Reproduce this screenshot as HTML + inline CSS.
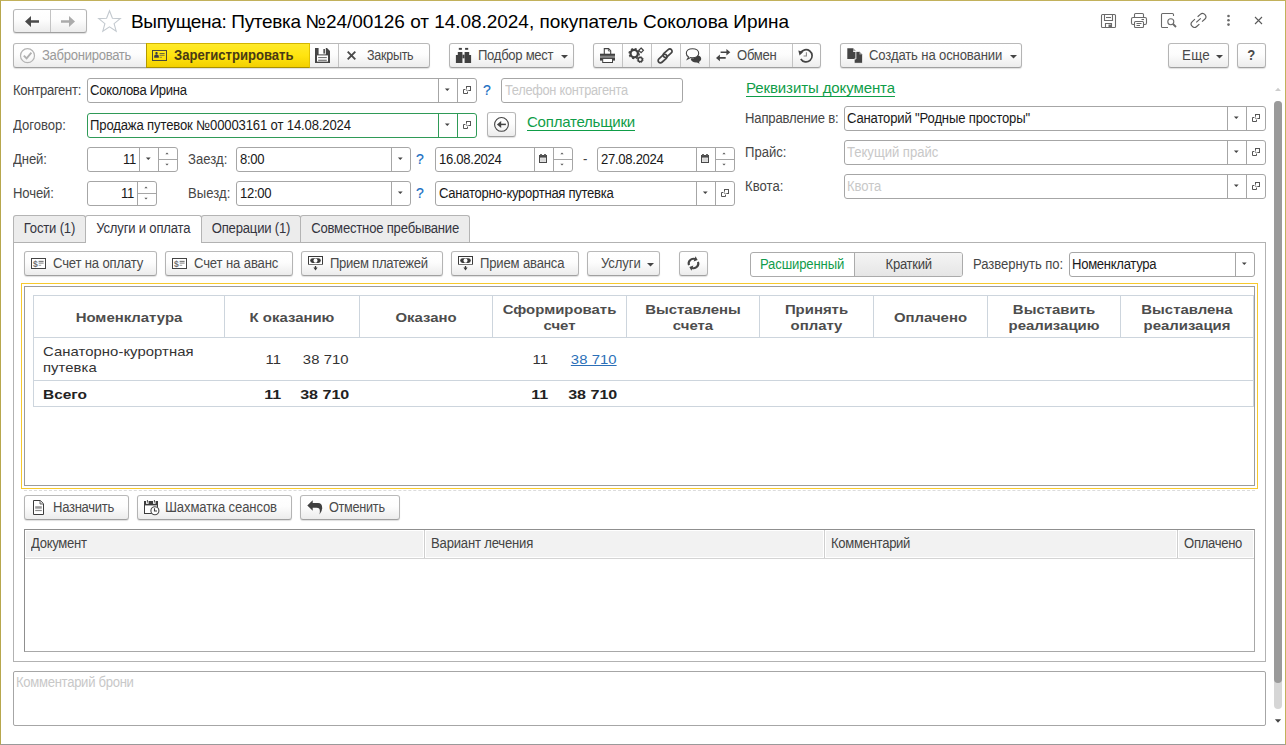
<!DOCTYPE html>
<html lang="ru"><head>
<meta charset="utf-8">
<title>Путевка</title>
<style>
*{box-sizing:border-box;margin:0;padding:0}
html,body{width:1286px;height:745px;overflow:hidden;background:#fff}
body{position:relative;font-family:"Liberation Sans",sans-serif;font-size:13px;letter-spacing:-0.25px;color:#333;
 border-left:1px solid #b7a74d;border-top:1px solid #c2b15b;border-right:1px solid #c2b15b;border-bottom:1px solid #9a9a9a}
#r{position:absolute;left:-1px;top:-1px;width:1286px;height:745px}
.a{position:absolute}
.btn{position:absolute;height:25px;border:1px solid #b4b4b4;border-top-color:#b9b9b9;border-bottom-color:#a0a0a0;border-radius:3px;
 background:linear-gradient(#ffffff 0%,#fdfdfd 45%,#ececec 100%);box-shadow:0 1px 1px rgba(0,0,0,.13);line-height:23px;white-space:nowrap;color:#4a4a4a}
.btn .t{position:absolute;top:0}
.btn svg{position:absolute}
.sep{position:absolute;top:0;width:1px;height:23px;background:#c3c3c3}
.inp{position:absolute;height:25px;border:1px solid #a6a6a6;border-radius:3px;background:#fff;line-height:23px;white-space:nowrap;color:#1a1a1a}
.inp .t{position:absolute;top:0}
.inp .ph{position:absolute;top:0;color:#c8c8c8}
.inp .d{position:absolute;top:0;width:1px;height:23px;background:#a6a6a6}
.inp.g{border-color:#2f9a57}
.inp.g .d{background:#2f9a57}
.inp svg{position:absolute}
.lbl{position:absolute;line-height:25px;white-space:nowrap;color:#464646}
.lnk{position:absolute;font-size:15px;letter-spacing:-0.2px;color:#0f9d48;text-decoration:underline;text-decoration-skip-ink:none;text-underline-offset:2.6px;text-decoration-thickness:1px;white-space:nowrap;line-height:18px}
.q{position:absolute;font-size:14px;-webkit-text-stroke:0.2px #1a6fc2;color:#1a6fc2;line-height:25px;letter-spacing:0}
.tab{position:absolute;top:215px;height:27px;border:1px solid #b4b4b4;border-bottom:none;border-radius:3px 3px 0 0;background:#ececec;line-height:25px;text-align:center;color:#34343e;letter-spacing:-0.15px}
.tab.on{background:#fff;height:28px;z-index:3}
</style>
</head>
<body>
<div id="r">
<!-- nav -->
<div class="btn" style="left:13px;top:9px;width:74px;height:24px">
 <div class="sep" style="left:36px;height:22px"></div>
 <svg style="left:8px;top:5px" width="20" height="13" viewBox="0 0 20 13"><path d="M3 6.5 L9 1 V5.2 H17 V7.8 H9 V12 Z" fill="#4a4a4a"></path></svg>
 <svg style="left:44px;top:5px" width="20" height="13" viewBox="0 0 20 13"><path d="M17 6.5 L11 1 V5.2 H3 V7.8 H11 V12 Z" fill="#ababab"></path></svg>
</div>
<!-- star -->
<svg class="a" style="left:97px;top:9px" width="25" height="24" viewBox="0 0 25 24"><path d="M12.5 1.8 L15.4 9.2 L23.3 9.6 L17.1 14.6 L19.2 22.2 L12.5 17.9 L5.8 22.2 L7.9 14.6 L1.7 9.6 L9.6 9.2 Z" fill="none" stroke="#c3c9cf" stroke-width="1.1" stroke-linejoin="miter"></path></svg>
<div class="a" style="left:131px;top:11px;font-size:19px;letter-spacing:-0.035px;line-height:22px;color:#000;white-space:nowrap"><span style="letter-spacing:-0.335px">Выпущена: Путевка </span>№24/00126 от 14.08.2024, покупатель Соколова Ирина</div>
<!-- top right icons -->
<svg class="a" style="left:1100px;top:13px" width="17" height="16" viewBox="0 0 17 16" fill="none" stroke="#6a6a6a" stroke-width="1.1">
 <path d="M1.5 2.6 Q1.5 1.5 2.6 1.5 H14.4 Q15.5 1.5 15.5 2.6 V13.4 Q15.5 14.5 14.4 14.5 H2.6 Q1.5 14.5 1.5 13.4 Z"></path>
 <path d="M4.5 1.5 V7.5 H12.5 V1.5"></path><path d="M6 4.5 H11"></path>
 <path d="M5.5 14.5 V10.5 H11.5 V14.5"></path><rect x="8.5" y="11.5" width="2.5" height="3" fill="#6a6a6a" stroke="none"></rect>
</svg>
<svg class="a" style="left:1130px;top:12px" width="18" height="17" viewBox="0 0 18 17" fill="none" stroke="#6a6a6a" stroke-width="1.1">
 <path d="M4.5 5.5 V2.6 Q4.5 1.5 5.6 1.5 H12.4 Q13.5 1.5 13.5 2.6 V5.5"></path>
 <path d="M4.5 12.5 H3 Q1.5 12.5 1.5 11 V7 Q1.5 5.5 3 5.5 H15 Q16.5 5.5 16.5 7 V11 Q16.5 12.5 15 12.5 H13.5"></path>
 <rect x="4.5" y="9.5" width="9" height="6" rx="1"></rect>
 <path d="M6.5 11.5 H11.5 M6.5 13.5 H10"></path><path d="M11.5 7.5 H14"></path>
</svg>
<svg class="a" style="left:1160px;top:12px" width="18" height="17" viewBox="0 0 18 17" fill="none" stroke="#6a6a6a" stroke-width="1.1">
 <path d="M13.5 4 V2.6 Q13.5 1.5 12.4 1.5 H2.6 Q1.5 1.5 1.5 2.6 V14.4 Q1.5 15.5 2.6 15.5 H8"></path>
 <circle cx="10.8" cy="9.8" r="3"></circle><path d="M13 12 L16 15" stroke-width="1.8"></path>
</svg>
<svg class="a" style="left:1189px;top:11px" width="19" height="19" viewBox="0 0 19 19" fill="none" stroke="#5e5e5e" stroke-width="1.15"><g transform="translate(9.5 9.4) rotate(-42)"><path d="M-1.8 -3.3 H-5.4 A3.3 3.3 0 0 0 -5.4 3.3 H-1.8 M1.8 -3.3 H5.4 A3.3 3.3 0 0 1 5.4 3.3 H1.8 M-3 0 H3"></path></g></svg>
<svg class="a" style="left:1226px;top:14px" width="5" height="13" viewBox="0 0 5 13"><circle cx="2.5" cy="2" r="1.3" fill="#6a6a6a"></circle><circle cx="2.5" cy="6.3" r="1.3" fill="#6a6a6a"></circle><circle cx="2.5" cy="10.6" r="1.3" fill="#6a6a6a"></circle></svg>
<svg class="a" style="left:1254px;top:16px" width="9" height="9" viewBox="0 0 9 9"><path d="M1 1 L8 8 M8 1 L1 8" stroke="#5a5a5a" stroke-width="1.1" fill="none"></path></svg>

<!-- toolbar group 1 -->
<div class="btn" style="left:13px;top:43px;width:417px">
 <svg style="left:5px;top:3px" width="17" height="17" viewBox="0 0 17 17" fill="none"><circle cx="8.5" cy="8.7" r="7" stroke="#b4b4b4" stroke-width="1.2"></circle><path d="M4.8 8.6 L7.6 11.4 L12.4 5.6" stroke="#b0b0b0" stroke-width="1.9"></path></svg>
 <div class="t" style="left: 28px; color: rgb(154, 154, 154); font-size: 14px; letter-spacing: -0.319px; transform: scaleX(0.935); transform-origin: 0px 50%;">Забронировать</div>
 <div class="a" style="left:132px;top:-1px;width:164px;height:25px;border:1px solid #c9a800;border-left-color:#b39a00;border-top-color:#d2b400;border-bottom-color:#a89000;border-right-color:#e2c300;background:linear-gradient(#ffea2a 0%,#ffe410 50%,#f3d000 100%)">
  <svg style="left:5px;top:6px" width="15" height="11" viewBox="0 0 15 11"><rect x="0.5" y="0.5" width="14" height="10" fill="none" stroke="#4b4a3c" stroke-width="1"></rect><rect x="3.4" y="2" width="2.2" height="2.6" rx="0.8" fill="#3c3c4a"></rect><path d="M2.2 7.8 V6 Q2.2 4.4 4.5 4.4 Q6.8 4.4 6.8 6 V7.8 Z" fill="#3c3c4a"></path><rect x="7.6" y="3" width="5" height="1.2" fill="#6e6838"></rect><rect x="7.6" y="5" width="5" height="1" fill="#9a8f30"></rect><rect x="7.6" y="6.8" width="2.4" height="1" fill="#9a8f30"></rect></svg>
  <div class="t" style="left: 27px; top: 0px; font-weight: bold; color: rgb(73, 58, 20); letter-spacing: -0.002px; font-size: 14px; transform: scaleX(0.935); transform-origin: 0px 50%;">Зарегистрировать</div>
 </div>
 <svg style="left:301px;top:4px" width="15" height="15" viewBox="0 0 15 15"><path d="M0 0 H12 L15 3 V15 H0 Z" fill="#454545"></path><rect x="3.6" y="0" width="7.2" height="6.4" fill="#fff"></rect><rect x="8.4" y="1" width="1.5" height="4.6" fill="#454545"></rect><rect x="2" y="7.4" width="11" height="6.2" fill="#fff"></rect><rect x="3.2" y="9" width="8.6" height="1.1" fill="#777"></rect><rect x="3.2" y="11.7" width="8.6" height="1.1" fill="#666"></rect></svg>
 <div class="sep" style="left:324px"></div>
 <svg style="left:333px;top:7px" width="9" height="9" viewBox="0 0 9 9"><path d="M0.7 0.7 L8.3 8.3 M8.3 0.7 L0.7 8.3" stroke="#4a4a4a" stroke-width="1.9"></path></svg>
 <div class="t" style="letter-spacing: -0.300px; left: 353px; font-size: 14px; transform: scaleX(0.8950); transform-origin: 0px 50%;">Закрыть</div>
</div>
<!-- Подбор мест -->
<div class="btn" style="left:449px;top:43px;width:125px">
 <svg style="left:5px;top:3px" width="17" height="17" viewBox="0 0 17 17" fill="#404040"><rect x="3.8" y="0.9" width="3.1" height="1.9"></rect><rect x="10.1" y="0.9" width="3.1" height="1.9"></rect><path d="M2.8 5 H7.4 V15.9 H0.9 V7.9 H2.8 Z"></path><path d="M9.6 5 H14.2 V7.9 H16.1 V15.9 H9.6 Z"></path><rect x="7.4" y="7.7" width="2.2" height="3.6"></rect></svg>
 <div class="t" style="left: 28px; font-size: 14px; letter-spacing: -0.32px; transform: scaleX(0.935); transform-origin: 0px 50%;">Подбор мест</div>
 <svg style="left:111px;top:11px" width="7" height="4" viewBox="0 0 7 4"><path d="M0 0 H7 L3.5 3.6 Z" fill="#444"></path></svg>
</div>
<!-- icon group -->
<div class="btn" style="left:593px;top:43px;width:228px">
 <div class="sep" style="left:28px"></div><div class="sep" style="left:57px"></div><div class="sep" style="left:86px"></div><div class="sep" style="left:115px"></div><div class="sep" style="left:198px"></div>
 <svg style="left:6px;top:4px" width="15" height="15" viewBox="0 0 15 15"><path d="M4.3 6 V0.6 H8.6 L10.7 2.7 V6" fill="#fff" stroke="#444" stroke-width="1.1"></path><path d="M8.4 0.8 V3 H10.6" fill="none" stroke="#555" stroke-width=".9"></path><rect x="0" y="5.7" width="15" height="2.2" fill="#404040"></rect><rect x="0" y="7.9" width="15" height="1.7" fill="#858585"></rect><rect x="0" y="9.6" width="15" height="3" fill="#404040"></rect><rect x="2.7" y="10.4" width="9.8" height="4.1" fill="#fff" stroke="#404040" stroke-width="1"></rect></svg>
 <svg style="left:34px;top:3px" width="17" height="17" viewBox="0 0 17 17" fill="none" stroke="#404040"><circle cx="6.2" cy="6.6" r="3.7" stroke-width="2.3"></circle><circle cx="6.2" cy="6.6" r="5.1" stroke-width="1.3" stroke-dasharray="2 2"></circle><circle cx="12.2" cy="12.6" r="2.1" stroke-width="1.5"></circle><circle cx="12.2" cy="12.6" r="3" stroke-width="0.9" stroke-dasharray="1.2 1.16"></circle><path d="M13.1 1 L15.4 3.3 L13.1 5.6 L10.8 3.3 Z" stroke-width="1.2"></path></svg>
 <svg style="left:63px;top:4px" width="16" height="16" viewBox="0 0 16 16" fill="none" stroke="#444" stroke-width="1.7"><rect x="-5.2" y="-2.3" width="10.4" height="4.6" rx="2.3" transform="translate(5.6 10.6) rotate(-42)"></rect><rect x="-5.2" y="-2.3" width="10.4" height="4.6" rx="2.3" transform="translate(10.6 5.2) rotate(-42)"></rect></svg>
 <svg style="left:91px;top:4px" width="17" height="16" viewBox="0 0 17 16"><path d="M7.5 0.7 C3.8 0.7 1.3 2.7 1.3 5.2 C1.3 6.9 2.3 8.2 3.6 9 L2.4 11.3 L5.6 9.6 C6.2 9.7 6.9 9.8 7.5 9.8 C11.2 9.8 13.7 7.8 13.7 5.2 C13.7 2.7 11.2 0.7 7.5 0.7 Z" fill="#fff" stroke="#444" stroke-width="1.1"></path><path d="M12.6 7.2 C14.8 7.6 16.2 9 16.2 10.8 C16.2 12.2 15.3 13.3 14 13.9 L14.6 15.8 L12 14.4 C8.6 14.7 6.2 13.3 5.8 11.2 L6.4 10.3 C9.8 10.3 12 9.2 12.6 7.2 Z" fill="#404040"></path></svg>
 <svg style="left:121px;top:5px" width="16" height="13" viewBox="0 0 16 13" fill="#444"><path d="M11.4 0 L15.3 3.3 L11.4 6.6 V4.1 H5.6 V2.5 H11.4 Z"></path><path d="M4.9 5.6 L1 8.9 L4.9 12.2 V9.7 H10.7 V8.1 H4.9 Z"></path></svg>
 <div class="t" style="left: 143px; font-size: 14px; letter-spacing: -0.328px; transform: scaleX(0.935); transform-origin: 0px 50%;">Обмен</div>
 <svg style="left:203px;top:3px" width="17" height="17" viewBox="0 0 17 17" fill="none" stroke="#444"><path d="M3.6 6 A6.1 6.1 0 1 1 3.8 12" stroke-width="1.7"></path><path d="M1.3 3.4 L6.3 4.8 L2.6 8.4 Z" fill="#444" stroke="none"></path><path d="M9.4 5.2 V9 H6.6" stroke="#888" stroke-width="1.1"></path></svg>
</div>
<!-- Создать на основании -->
<div class="btn" style="left:840px;top:43px;width:182px">
 <svg style="left:6px;top:4px" width="16" height="16" viewBox="0 0 16 16"><path d="M0.3 0.3 H6 L8.9 3.2 V11 H0.3 Z" fill="#444"></path><path d="M6 0.3 V3.2 H8.9 Z" fill="#999"></path><path d="M6.3 3.4 H12.4 L15.6 6.6 V15.3 H7.2 V11 H8.9 V3.4 Z" fill="#444" stroke="#fff" stroke-width=".8"></path><path d="M12.4 3.6 V6.6 H15.4 Z" fill="#999"></path></svg>
 <div class="t" style="letter-spacing: -0.146px; left: 28px; font-size: 14px; transform: scaleX(0.935); transform-origin: 0px 50%;">Создать на основании</div>
 <svg style="left:169px;top:11px" width="7" height="4" viewBox="0 0 7 4"><path d="M0 0 H7 L3.5 3.6 Z" fill="#444"></path></svg>
</div>
<!-- Еще -->
<div class="btn" style="left:1168px;top:43px;width:61px">
 <div class="t" style="left: 13px; font-size: 14px; letter-spacing: 0.3px; transform: scaleX(0.9561); transform-origin: 0px 50%;">Еще</div>
 <svg style="left:47px;top:11px" width="7" height="4" viewBox="0 0 7 4"><path d="M0 0 H7 L3.5 3.6 Z" fill="#444"></path></svg>
</div>
<div class="btn" style="left:1237px;top:43px;width:29px;text-align:center;font-weight:bold;font-size:13px;letter-spacing:0"><span style="display: inline-block; font-size: 14px; letter-spacing: -0.056px; transform: scaleX(0.935); transform-origin: 50% 50%;">?</span></div>

<!-- form left -->
<div class="lbl" style="left: 13px; top: 78px; font-size: 14px; letter-spacing: -0.315px; transform: scaleX(0.935); transform-origin: 0px 50%;">Контрагент:</div>
<div class="inp" style="left:87px;top:78px;width:390px">
 <div class="t" style="left: 2px; font-size: 14px; letter-spacing: -0.32px; transform: scaleX(0.935); transform-origin: 0px 50%;">Соколова Ирина</div>
 <div class="d" style="left:350px"></div><div class="d" style="left:369px"></div>
 <svg style="left:356px;top:9px" width="7" height="4" viewBox="0 0 7 4"><path d="M0.9 0.4 H5.7 L3.3 3.1 Z" fill="#444"></path></svg>
 <svg style="left:375px;top:7px" width="8" height="8" viewBox="0 0 8 8" fill="none" stroke-width="1"><rect x="3.5" y="0.5" width="4" height="4" stroke="#555"></rect><path d="M3.5 2.5 V4.5 H5.5" stroke="#b8b8b8"></path><path d="M2.4 3.5 H0.5 V7.5 H4.5 V5.6" stroke="#555"></path></svg>
</div>
<div class="q" style="left:483px;top:78px">?</div>
<div class="inp" style="left:501px;top:78px;width:182px"><div class="ph" style="letter-spacing: -0.300px; left: 3px; font-size: 14px; transform: scaleX(0.9140); transform-origin: 0px 50%;">Телефон контрагента</div></div>

<div class="lbl" style="letter-spacing: -0.016px; left: 13px; top: 113px; font-size: 14px; transform: scaleX(0.935); transform-origin: 0px 50%;">Договор:</div>
<div class="inp g" style="left:87px;top:113px;width:390px">
 <div class="t" style="letter-spacing: -0.157px; left: 2px; font-size: 14px; transform: scaleX(0.935); transform-origin: 0px 50%;">Продажа путевок №00003161 от 14.08.2024</div>
 <div class="d" style="left:350px"></div><div class="d" style="left:369px"></div>
 <svg style="left:356px;top:9px" width="7" height="4" viewBox="0 0 7 4"><path d="M0.9 0.4 H5.7 L3.3 3.1 Z" fill="#444"></path></svg>
 <svg style="left:375px;top:7px" width="8" height="8" viewBox="0 0 8 8" fill="none" stroke-width="1"><rect x="3.5" y="0.5" width="4" height="4" stroke="#555"></rect><path d="M3.5 2.5 V4.5 H5.5" stroke="#b8b8b8"></path><path d="M2.4 3.5 H0.5 V7.5 H4.5 V5.6" stroke="#555"></path></svg>
</div>
<div class="btn" style="left:487px;top:112px;width:29px">
 <svg style="left:5px;top:3px" width="17" height="17" viewBox="0 0 17 17" fill="none" stroke="#444"><circle cx="8.5" cy="8.4" r="6.9" stroke-width="1.1"></circle><path d="M12.9 8.4 H8" stroke-width="1.5"></path><path d="M3.9 8.4 L8.2 4.9 V11.9 Z" fill="#444" stroke="none"></path></svg>
</div>
<div class="lnk" style="letter-spacing:-0.22px;left:527px;top:113px">Соплательщики</div>

<div class="lbl" style="letter-spacing: -0.104px; left: 13px; top: 147px; font-size: 14px; transform: scaleX(0.935); transform-origin: 0px 50%;">Дней:</div>
<div class="inp" style="left:87px;top:147px;width:91px">
 <div class="t" style="right: 41px; font-size: 14px; letter-spacing: -0.322px; transform: scaleX(0.935); transform-origin: 100% 50%;">11</div>
 <div class="d" style="left:51px"></div><div class="d" style="left:70px"></div>
 <div class="a" style="left:71px;top:11px;width:18px;height:1px;background:#a6a6a6"></div>
 <svg style="left:57px;top:9px" width="7" height="4" viewBox="0 0 7 4"><path d="M0.9 0.4 H5.7 L3.3 3.1 Z" fill="#444"></path></svg>
 <svg style="left:77px;top:4px" width="4" height="3" viewBox="0 0 4 3"><path d="M0.4 2.3 H3.6 L2 0.5 Z" fill="#555"></path></svg>
 <svg style="left:77px;top:15px" width="4" height="3" viewBox="0 0 4 3"><path d="M0.4 0.7 H3.6 L2 2.5 Z" fill="#555"></path></svg>
</div>
<div class="lbl" style="letter-spacing: 0.059px; left: 188px; top: 147px; font-size: 14px; transform: scaleX(0.935); transform-origin: 0px 50%;">Заезд:</div>
<div class="inp" style="left:236px;top:147px;width:175px">
 <div class="t" style="left: 3px; font-size: 14px; letter-spacing: -0.312px; transform: scaleX(0.935); transform-origin: 0px 50%;">8:00</div>
 <div class="d" style="left:154px"></div>
 <svg style="left:160px;top:9px" width="7" height="4" viewBox="0 0 7 4"><path d="M0.9 0.4 H5.7 L3.3 3.1 Z" fill="#444"></path></svg>
</div>
<div class="q" style="left:416px;top:147px">?</div>
<div class="inp" style="left:435px;top:147px;width:138px">
 <div class="t" style="left: 3px; font-size: 14px; letter-spacing: -0.315px; transform: scaleX(0.935); transform-origin: 0px 50%;">16.08.2024</div>
 <div class="d" style="left:98px"></div><div class="d" style="left:117px"></div>
 <div class="a" style="left:118px;top:11px;width:18px;height:1px;background:#a6a6a6"></div>
 <svg style="left:103px;top:6px" width="8" height="9" viewBox="0 0 8 9"><rect x="0" y="1" width="8" height="8" fill="#4a4a4a"></rect><rect x="1" y="0" width="2" height="1.4" fill="#6a6a6a"></rect><rect x="5" y="0" width="2" height="1.4" fill="#6a6a6a"></rect><rect x="1" y="3.6" width="6" height="4.4" fill="#e4e4e4"></rect><path d="M3 3.6 V8 M5 3.6 V8 M1 5.8 H7" stroke="#cfcfcf" stroke-width=".6"></path></svg>
 <svg style="left:124px;top:4px" width="4" height="3" viewBox="0 0 4 3"><path d="M0.4 2.3 H3.6 L2 0.5 Z" fill="#555"></path></svg>
 <svg style="left:124px;top:15px" width="4" height="3" viewBox="0 0 4 3"><path d="M0.4 0.7 H3.6 L2 2.5 Z" fill="#555"></path></svg>
</div>
<div class="lbl" style="left: 583px; top: 147px; font-size: 14px; letter-spacing: -0.294px; transform: scaleX(0.935); transform-origin: 0px 50%;">-</div>
<div class="inp" style="left:597px;top:147px;width:138px">
 <div class="t" style="left: 3px; font-size: 14px; letter-spacing: -0.315px; transform: scaleX(0.935); transform-origin: 0px 50%;">27.08.2024</div>
 <div class="d" style="left:98px"></div><div class="d" style="left:117px"></div>
 <div class="a" style="left:118px;top:11px;width:18px;height:1px;background:#a6a6a6"></div>
 <svg style="left:103px;top:6px" width="8" height="9" viewBox="0 0 8 9"><rect x="0" y="1" width="8" height="8" fill="#4a4a4a"></rect><rect x="1" y="0" width="2" height="1.4" fill="#6a6a6a"></rect><rect x="5" y="0" width="2" height="1.4" fill="#6a6a6a"></rect><rect x="1" y="3.6" width="6" height="4.4" fill="#e4e4e4"></rect><path d="M3 3.6 V8 M5 3.6 V8 M1 5.8 H7" stroke="#cfcfcf" stroke-width=".6"></path></svg>
 <svg style="left:124px;top:4px" width="4" height="3" viewBox="0 0 4 3"><path d="M0.4 2.3 H3.6 L2 0.5 Z" fill="#555"></path></svg>
 <svg style="left:124px;top:15px" width="4" height="3" viewBox="0 0 4 3"><path d="M0.4 0.7 H3.6 L2 2.5 Z" fill="#555"></path></svg>
</div>

<div class="lbl" style="letter-spacing: -0.137px; left: 13px; top: 181px; font-size: 14px; transform: scaleX(0.935); transform-origin: 0px 50%;">Ночей:</div>
<div class="inp" style="left:87px;top:181px;width:70px">
 <div class="t" style="right: 22px; font-size: 14px; letter-spacing: -0.322px; transform: scaleX(0.935); transform-origin: 100% 50%;">11</div>
 <div class="d" style="left:49px"></div>
 <div class="a" style="left:50px;top:11px;width:18px;height:1px;background:#a6a6a6"></div>
 <svg style="left:56px;top:4px" width="4" height="3" viewBox="0 0 4 3"><path d="M0.4 2.3 H3.6 L2 0.5 Z" fill="#555"></path></svg>
 <svg style="left:56px;top:15px" width="4" height="3" viewBox="0 0 4 3"><path d="M0.4 0.7 H3.6 L2 2.5 Z" fill="#555"></path></svg>
</div>
<div class="lbl" style="letter-spacing: 0.054px; left: 188px; top: 181px; font-size: 14px; transform: scaleX(0.935); transform-origin: 0px 50%;">Выезд:</div>
<div class="inp" style="left:236px;top:181px;width:175px">
 <div class="t" style="left: 3px; font-size: 14px; letter-spacing: -0.315px; transform: scaleX(0.935); transform-origin: 0px 50%;">12:00</div>
 <div class="d" style="left:154px"></div>
 <svg style="left:160px;top:9px" width="7" height="4" viewBox="0 0 7 4"><path d="M0.9 0.4 H5.7 L3.3 3.1 Z" fill="#444"></path></svg>
</div>
<div class="q" style="left:416px;top:181px">?</div>
<div class="inp" style="left:435px;top:181px;width:300px">
 <div class="t" style="left: 3px; font-size: 14px; letter-spacing: -0.317px; transform: scaleX(0.935); transform-origin: 0px 50%;">Санаторно-курортная путевка</div>
 <div class="d" style="left:260px"></div><div class="d" style="left:279px"></div>
 <svg style="left:266px;top:9px" width="7" height="4" viewBox="0 0 7 4"><path d="M0.9 0.4 H5.7 L3.3 3.1 Z" fill="#444"></path></svg>
 <svg style="left:285px;top:7px" width="8" height="8" viewBox="0 0 8 8" fill="none" stroke-width="1"><rect x="3.5" y="0.5" width="4" height="4" stroke="#555"></rect><path d="M3.5 2.5 V4.5 H5.5" stroke="#b8b8b8"></path><path d="M2.4 3.5 H0.5 V7.5 H4.5 V5.6" stroke="#555"></path></svg>
</div>

<!-- form right -->
<div class="lnk" style="letter-spacing:-0.1px;left:746px;top:79px">Реквизиты документа</div>
<div class="lbl" style="letter-spacing: -0.19px; left: 745px; top: 106px; font-size: 14px; transform: scaleX(0.935); transform-origin: 0px 50%;">Направление в:</div>
<div class="inp" style="left:844px;top:106px;width:422px">
 <div class="t" style="letter-spacing: -0.18px; left: 2px; font-size: 14px; transform: scaleX(0.935); transform-origin: 0px 50%;">Санаторий "Родные просторы"</div>
 <div class="d" style="left:382px"></div><div class="d" style="left:401px"></div>
 <svg style="left:388px;top:9px" width="7" height="4" viewBox="0 0 7 4"><path d="M0.9 0.4 H5.7 L3.3 3.1 Z" fill="#444"></path></svg>
 <svg style="left:407px;top:7px" width="8" height="8" viewBox="0 0 8 8" fill="none" stroke-width="1"><rect x="3.5" y="0.5" width="4" height="4" stroke="#555"></rect><path d="M3.5 2.5 V4.5 H5.5" stroke="#b8b8b8"></path><path d="M2.4 3.5 H0.5 V7.5 H4.5 V5.6" stroke="#555"></path></svg>
</div>
<div class="lbl" style="letter-spacing: -0.029px; left: 745px; top: 140px; font-size: 14px; transform: scaleX(0.935); transform-origin: 0px 50%;">Прайс:</div>
<div class="inp" style="left:844px;top:140px;width:422px">
 <div class="ph" style="letter-spacing: -0.019px; left: 2px; font-size: 14px; transform: scaleX(0.935); transform-origin: 0px 50%;">Текущий прайс</div>
 <div class="d" style="left:382px"></div><div class="d" style="left:401px"></div>
 <svg style="left:388px;top:9px" width="7" height="4" viewBox="0 0 7 4"><path d="M0.9 0.4 H5.7 L3.3 3.1 Z" fill="#444"></path></svg>
 <svg style="left:407px;top:7px" width="8" height="8" viewBox="0 0 8 8" fill="none" stroke-width="1"><rect x="3.5" y="0.5" width="4" height="4" stroke="#555"></rect><path d="M3.5 2.5 V4.5 H5.5" stroke="#b8b8b8"></path><path d="M2.4 3.5 H0.5 V7.5 H4.5 V5.6" stroke="#555"></path></svg>
</div>
<div class="lbl" style="letter-spacing: 0.058px; left: 745px; top: 174px; font-size: 14px; transform: scaleX(0.935); transform-origin: 0px 50%;">Квота:</div>
<div class="inp" style="left:844px;top:174px;width:422px">
 <div class="ph" style="letter-spacing: -0.051px; left: 2px; font-size: 14px; transform: scaleX(0.935); transform-origin: 0px 50%;">Квота</div>
 <div class="d" style="left:382px"></div><div class="d" style="left:401px"></div>
 <svg style="left:388px;top:9px" width="7" height="4" viewBox="0 0 7 4"><path d="M0.9 0.4 H5.7 L3.3 3.1 Z" fill="#444"></path></svg>
 <svg style="left:407px;top:7px" width="8" height="8" viewBox="0 0 8 8" fill="none" stroke-width="1"><rect x="3.5" y="0.5" width="4" height="4" stroke="#555"></rect><path d="M3.5 2.5 V4.5 H5.5" stroke="#b8b8b8"></path><path d="M2.4 3.5 H0.5 V7.5 H4.5 V5.6" stroke="#555"></path></svg>
</div>

<!-- tab panel -->
<div class="a" style="left:13px;top:242px;width:1253px;height:420px;border:1px solid #b2b2b2"></div>
<div class="tab" style="left:13px;width:73px"><span style="display: inline-block; font-size: 14px; letter-spacing: -0.203px; transform: scaleX(0.935); transform-origin: 50% 50%;">Гости (1)</span></div>
<div class="tab on" style="left:85px;width:117px"><span style="display: inline-block; font-size: 14px; letter-spacing: -0.208px; transform: scaleX(0.935); transform-origin: 50% 50%;">Услуги и оплата</span></div>
<div class="tab" style="left:201px;width:100px"><span style="display: inline-block; font-size: 14px; letter-spacing: -0.211px; transform: scaleX(0.935); transform-origin: 50% 50%;">Операции (1)</span></div>
<div class="tab" style="left:300px;width:170px"><span style="display: inline-block; font-size: 14px; letter-spacing: -0.214px; transform: scaleX(0.935); transform-origin: 50% 50%;">Совместное пребывание</span></div>
<!-- buttons row -->
<div class="btn" style="left:24px;top:251px;width:133px">
 <svg style="left:6px;top:6px" width="15" height="11" viewBox="0 0 15 11"><rect x="0.5" y="0.5" width="14" height="10" fill="#fff" stroke="#444"></rect><text x="2" y="8.7" font-family="Liberation Sans" font-size="8.5" font-weight="bold" fill="#707070" letter-spacing="0">$</text><rect x="7.6" y="2.8" width="5" height="1.6" fill="#808080"></rect><rect x="7.6" y="5" width="5" height="1" fill="#b0b0b0"></rect><rect x="7.6" y="6.8" width="2.6" height="1" fill="#a0a0a0"></rect></svg>
 <div class="t" style="left: 28px; letter-spacing: -0.177px; font-size: 14px; transform: scaleX(0.935); transform-origin: 0px 50%;">Счет на оплату</div>
</div>
<div class="btn" style="left:165px;top:251px;width:128px">
 <svg style="left:6px;top:6px" width="15" height="11" viewBox="0 0 15 11"><rect x="0.5" y="0.5" width="14" height="10" fill="#fff" stroke="#444"></rect><text x="2" y="8.7" font-family="Liberation Sans" font-size="8.5" font-weight="bold" fill="#707070" letter-spacing="0">$</text><rect x="7.6" y="2.8" width="5" height="1.6" fill="#808080"></rect><rect x="7.6" y="5" width="5" height="1" fill="#b0b0b0"></rect><rect x="7.6" y="6.8" width="2.6" height="1" fill="#a0a0a0"></rect></svg>
 <div class="t" style="left: 28px; letter-spacing: -0.135px; font-size: 14px; transform: scaleX(0.935); transform-origin: 0px 50%;">Счет на аванс</div>
</div>
<div class="btn" style="left:301px;top:251px;width:142px">
 <svg style="left:6px;top:4px" width="15" height="15" viewBox="0 0 15 15"><rect x="0.5" y="0.5" width="14" height="8" fill="#fff" stroke="#3a3a3a" stroke-width="1"></rect><rect x="0" y="8" width="15" height="1" fill="#777"></rect><rect x="2.2" y="2.2" width="10.6" height="4.8" rx="2.4" fill="#3a3a3a"></rect><ellipse cx="7.5" cy="4.6" rx="2" ry="2.2" fill="#fff"></ellipse><path d="M7.5 10 V12.6" stroke="#3a3a3a" stroke-width="1.3"></path><path d="M5.4 11.6 H9.6 L7.5 14.6 Z" fill="#3a3a3a"></path></svg>
 <div class="t" style="left: 28px; font-size: 14px; letter-spacing: -0.321px; transform: scaleX(0.935); transform-origin: 0px 50%;">Прием платежей</div>
</div>
<div class="btn" style="left:451px;top:251px;width:128px">
 <svg style="left:6px;top:4px" width="15" height="15" viewBox="0 0 15 15"><rect x="0.5" y="0.5" width="14" height="8" fill="#fff" stroke="#3a3a3a" stroke-width="1"></rect><rect x="0" y="8" width="15" height="1" fill="#777"></rect><rect x="2.2" y="2.2" width="10.6" height="4.8" rx="2.4" fill="#3a3a3a"></rect><ellipse cx="7.5" cy="4.6" rx="2" ry="2.2" fill="#fff"></ellipse><path d="M7.5 10 V12.6" stroke="#3a3a3a" stroke-width="1.3"></path><path d="M5.4 11.6 H9.6 L7.5 14.6 Z" fill="#3a3a3a"></path></svg>
 <div class="t" style="letter-spacing: -0.181px; left: 28px; font-size: 14px; transform: scaleX(0.935); transform-origin: 0px 50%;">Прием аванса</div>
</div>
<div class="btn" style="left:587px;top:251px;width:73px">
 <div class="t" style="letter-spacing: -0.103px; left: 13px; font-size: 14px; transform: scaleX(0.935); transform-origin: 0px 50%;">Услуги</div>
 <svg style="left:59px;top:11px" width="7" height="4" viewBox="0 0 7 4"><path d="M0 0 H7 L3.5 3.6 Z" fill="#444"></path></svg>
</div>
<div class="btn" style="left:679px;top:251px;width:29px">
 <svg style="left:6px;top:4px" width="15" height="15" viewBox="0 0 15 15" fill="none" stroke="#444" stroke-width="2.1"><g><path d="M3.0 9.2 A4.7 4.7 0 0 1 9.0 3.1"></path><path d="M11.6 3.9 L9.6 0.3 L7.6 5.6 Z" fill="#444" stroke="none"></path></g><g transform="rotate(180 7.5 7.5)"><path d="M3.0 9.2 A4.7 4.7 0 0 1 9.0 3.1"></path><path d="M11.6 3.9 L9.6 0.3 L7.6 5.6 Z" fill="#444" stroke="none"></path></g></svg>
</div>
<!-- toggle -->
<div class="a" style="left:750px;top:252px;width:213px;height:25px;border:1px solid #ababab;border-radius:3px;background:#fff;overflow:hidden;line-height:23px">
 <div class="a" style="letter-spacing: -0.142px; padding-right: 1px; left: 0px; top: 0px; width: 103px; height: 23px; text-align: center; color: rgb(17, 156, 76); font-size: 14px; transform: scaleX(0.935); transform-origin: 50% 50%;">Расширенный</div>
 <div class="a" style="left:103px;top:0;width:108px;height:23px;border-left:1px solid #ababab;background:linear-gradient(#f4f4f4,#e6e6e6);text-align:center;color:#444"><span style="display: inline-block; font-size: 14px; letter-spacing: -0.318px; transform: scaleX(0.935); transform-origin: 50% 50%;">Краткий</span></div>
</div>
<div class="lbl" style="letter-spacing: -0.069px; left: 973px; top: 252px; font-size: 14px; transform: scaleX(0.935); transform-origin: 0px 50%;">Развернуть по:</div>
<div class="inp" style="left:1069px;top:252px;width:186px">
 <div class="t" style="left: 2px; font-size: 14px; letter-spacing: -0.321px; transform: scaleX(0.935); transform-origin: 0px 50%;">Номенклатура</div>
 <div class="d" style="left:165px"></div>
 <svg style="left:171px;top:9px" width="7" height="4" viewBox="0 0 7 4"><path d="M0.9 0.4 H5.7 L3.3 3.1 Z" fill="#444"></path></svg>
</div>

<!-- yellow frame + grey frame -->
<div class="a" style="left:21px;top:283px;width:1237px;height:206px;border:1px solid #f7c92d"></div>
<div class="a" style="left:24px;top:286px;width:1231px;height:200px;border:1px solid #9c9c9c"></div>
<div class="a" style="left:24px;top:490px;width:1231px;height:0;border-top:1px dashed #dcdcdc"></div>
<style>
.gl{position:absolute;background:#cdd5dd}
.th{position:absolute;top:297px;height:41px;display:flex;align-items:center;justify-content:center;text-align:center;font-weight:bold;font-size:13.5px;letter-spacing:0;line-height:16px;color:#4d4d4d;transform:scaleX(1.105)}
.td{position:absolute;font-size:13.5px;letter-spacing:.05px;line-height:16px;color:#333;white-space:nowrap;transform:scaleX(1.1);transform-origin:0 50%}
.td.b{font-weight:bold;color:#222;letter-spacing:0;transform:scaleX(1.19)}
.td.num{text-align:right;transform-origin:100% 50%}
</style>
<!-- grid lines -->
<div class="gl" style="left:33px;top:295px;width:1221px;height:1px"></div>
<div class="gl" style="left:33px;top:337px;width:1221px;height:1px"></div>
<div class="gl" style="left:33px;top:380px;width:1221px;height:1px"></div>
<div class="gl" style="left:33px;top:406px;width:1221px;height:1px"></div>
<div class="gl" style="left:33px;top:295px;width:1px;height:112px"></div>
<div class="gl" style="left:1253px;top:295px;width:1px;height:112px"></div>
<div class="gl" style="left:224px;top:295px;width:1px;height:43px"></div>
<div class="gl" style="left:359px;top:295px;width:1px;height:43px"></div>
<div class="gl" style="left:492px;top:295px;width:1px;height:43px"></div>
<div class="gl" style="left:626px;top:295px;width:1px;height:43px"></div>
<div class="gl" style="left:759px;top:295px;width:1px;height:43px"></div>
<div class="gl" style="left:873px;top:295px;width:1px;height:43px"></div>
<div class="gl" style="left:987px;top:295px;width:1px;height:43px"></div>
<div class="gl" style="left:1120px;top:295px;width:1px;height:43px"></div>
<!-- headers -->
<div class="th" style="left:34px;width:190px">Номенклатура</div>
<div class="th" style="left:225px;width:134px">К оказанию</div>
<div class="th" style="left:360px;width:132px">Оказано</div>
<div class="th" style="left:493px;width:133px">Сформировать<br>счет</div>
<div class="th" style="left:627px;width:132px">Выставлены<br>счета</div>
<div class="th" style="left:760px;width:113px">Принять<br>оплату</div>
<div class="th" style="left:874px;width:113px">Оплачено</div>
<div class="th" style="left:988px;width:132px">Выставить<br>реализацию</div>
<div class="th" style="left:1121px;width:132px">Выставлена<br>реализация</div>
<!-- row 1 -->
<div class="td" style="left:43px;top:344px">Санаторно-курортная<br>путевка</div>
<div class="td num" style="right:1005px;top:352px">11</div>
<div class="td num" style="right:937px;top:352px">38 710</div>
<div class="td num" style="right:738px;top:352px">11</div>
<div class="td num" style="right:669px;top:352px;color:#2b6fb8;text-decoration:underline">38 710</div>
<!-- total -->
<div class="td b" style="left:43px;top:387px;transform:scaleX(1.145)">Всего</div>
<div class="td b num" style="right:1005px;top:387px">11</div>
<div class="td b num" style="right:937px;top:387px">38 710</div>
<div class="td b num" style="right:738px;top:387px">11</div>
<div class="td b num" style="right:669px;top:387px">38 710</div>

<!-- bottom buttons -->
<div class="btn" style="left:24px;top:495px;width:105px">
 <svg style="left:8px;top:4px" width="11" height="15" viewBox="0 0 11 15"><path d="M0.5 0.5 H7.3 L10.5 3.7 V14.5 H0.5 Z" fill="#fff" stroke="#3c3c3c"></path><path d="M7 0.8 V4 H10.2" fill="#ddd" stroke="#555" stroke-width=".9"></path><rect x="2.2" y="6.2" width="6.6" height="2.5" fill="#9a9a9a"></rect><rect x="2.2" y="9.9" width="6.6" height="1.2" fill="#8a8a8a"></rect></svg>
 <div class="t" style="left: 28px; font-size: 14px; letter-spacing: -0.32px; transform: scaleX(0.935); transform-origin: 0px 50%;">Назначить</div>
</div>
<div class="btn" style="left:137px;top:495px;width:155px">
 <svg style="left:6px;top:3px" width="17" height="17" viewBox="0 0 17 17"><rect x="0.5" y="2.5" width="13" height="12" fill="#fff" stroke="#3c3c3c" stroke-width="1"></rect><rect x="0" y="2" width="14" height="4.4" fill="#3c3c3c"></rect><rect x="2" y="2" width="2.6" height="2.8" fill="#fff"></rect><rect x="9" y="2" width="2.6" height="2.8" fill="#fff"></rect><rect x="2.9" y="1" width="0.9" height="2.6" fill="#3c3c3c"></rect><rect x="9.9" y="1" width="0.9" height="2.6" fill="#3c3c3c"></rect><circle cx="10.9" cy="11.8" r="4" fill="#fff" stroke="#4a4a4a" stroke-width="1.1"></circle><path d="M10.5 9.3 V12 H13" fill="none" stroke="#3c3c3c" stroke-width="1.1"></path></svg>
 <div class="t" style="letter-spacing: -0.139px; margin-left: -1px; left: 28px; font-size: 14px; transform: scaleX(0.935); transform-origin: 0px 50%;">Шахматка сеансов</div>
</div>
<div class="btn" style="left:300px;top:495px;width:100px">
 <svg style="left:6px;top:4px" width="16" height="15" viewBox="0 0 16 15"><path d="M0.3 5.5 L5.7 0.3 V3 H11 Q15.2 3 15.2 8 Q15.2 11.5 12.5 14.4 Q13.3 10.5 12.3 8.8 Q11.5 7.7 9.5 7.7 H5.7 V10.7 Z" fill="#404040"></path></svg>
 <div class="t" style="letter-spacing: -0.300px; left: 28px; font-size: 14px; transform: scaleX(0.9050); transform-origin: 0px 50%;">Отменить</div>
</div>
<!-- table 2 -->
<div class="a" style="left:24px;top:529px;width:1231px;height:123px;border:1px solid #8f8f8f;border-right-color:#a8a8a8;border-bottom-color:#a8a8a8;background:#fff"></div>
<div class="a" style="left:26px;top:531px;width:1227px;height:26px;background:#f2f2f2"></div>
<div class="a" style="left:25px;top:558px;width:1229px;height:1px;background:#d4d4d4"></div>
<div class="a" style="left:423px;top:530px;width:3px;height:28px;background:#fff"></div><div class="a" style="left:424px;top:530px;width:1px;height:28px;background:#cfcfcf"></div>
<div class="a" style="left:823px;top:530px;width:3px;height:28px;background:#fff"></div><div class="a" style="left:824px;top:530px;width:1px;height:28px;background:#cfcfcf"></div>
<div class="a" style="left:1176px;top:530px;width:3px;height:28px;background:#fff"></div><div class="a" style="left:1177px;top:530px;width:1px;height:28px;background:#cfcfcf"></div>
<div class="lbl" style="left: 31px; top: 531px; color: rgb(68, 68, 68); font-size: 14px; letter-spacing: -0.321px; transform: scaleX(0.935); transform-origin: 0px 50%;">Документ</div>
<div class="lbl" style="letter-spacing: -0.202px; left: 431px; top: 531px; color: rgb(68, 68, 68); font-size: 14px; transform: scaleX(0.935); transform-origin: 0px 50%;">Вариант лечения</div>
<div class="lbl" style="left: 831px; top: 531px; color: rgb(68, 68, 68); font-size: 14px; letter-spacing: -0.322px; transform: scaleX(0.935); transform-origin: 0px 50%;">Комментарий</div>
<div class="lbl" style="left: 1184px; top: 531px; color: rgb(68, 68, 68); font-size: 14px; letter-spacing: -0.323px; transform: scaleX(0.935); transform-origin: 0px 50%;">Оплачено</div>
<!-- comment -->
<div class="inp" style="left:13px;top:671px;width:1253px;height:55px;border-radius:2px"><div class="ph" style="left: 2px; top: -1px; font-size: 14px; letter-spacing: -0.321px; transform: scaleX(0.935); transform-origin: 0px 50%;">Комментарий брони</div></div>

<svg class="a" style="left:1274px;top:87px" width="8" height="5" viewBox="0 0 8 5"><path d="M1 4 H7 L4 0.8 Z" fill="#cdcdcd"></path></svg>
<div class="a" style="left:1274px;top:101px;width:8px;height:608px;border-radius:4px;background:#d6d6d6"></div>
<div class="a" style="left:1274px;top:101px;width:8px;height:582px;border-radius:4px;background:#9a9a9a"></div>
<svg class="a" style="left:1274px;top:719px" width="8" height="5" viewBox="0 0 8 5"><path d="M0.9 0.3 H7.1 L4 3.8 Z" fill="#444"></path></svg>

</div>


</body></html>
